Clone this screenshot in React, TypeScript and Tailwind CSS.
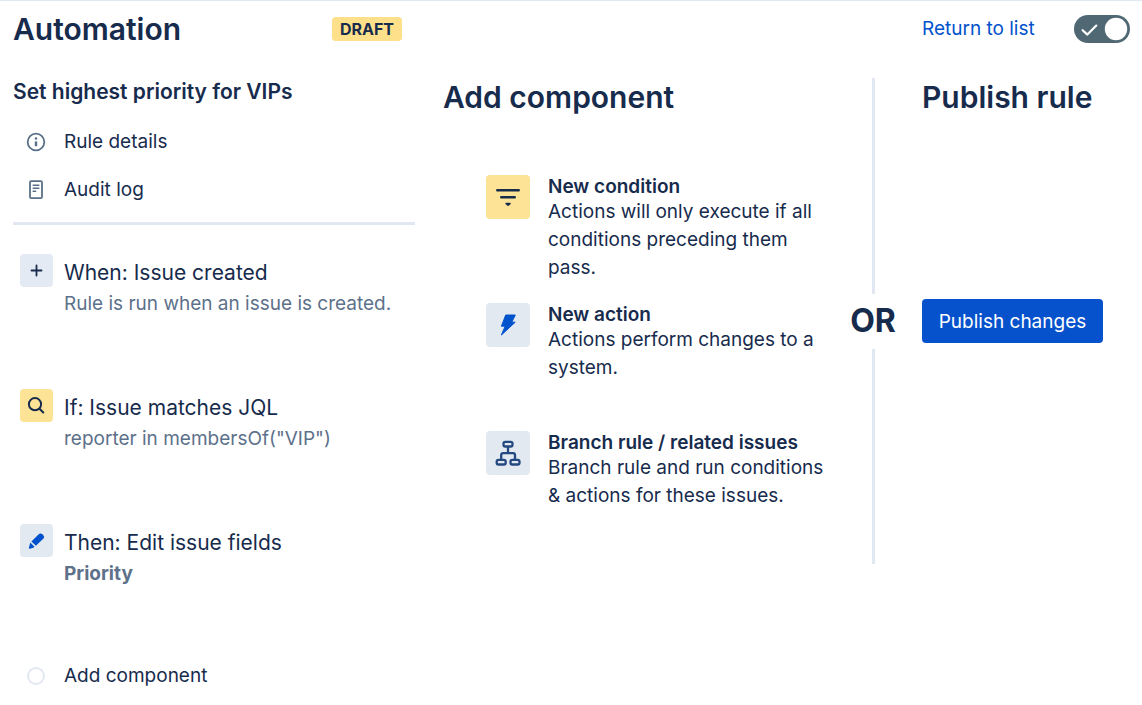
import { useState } from "react";
import type { ReactNode } from "react";

const PlusIcon = () => (
  <svg viewBox="0 0 33 33" className="size-full" fill="none" stroke="#172b4d" strokeWidth="1.8" strokeLinecap="round" aria-hidden="true">
    <path d="M16.5 11.5v10M11.5 16.5h10" />
  </svg>
);

const SearchIcon = () => (
  <svg viewBox="0 0 33 33" className="size-full" fill="none" stroke="#172b4d" strokeWidth="2" strokeLinecap="round" aria-hidden="true">
    <circle cx="15" cy="15.2" r="6.1" />
    <path d="M19.5 19.7l3.8 3.8" />
  </svg>
);

const PencilIcon = () => (
  <svg viewBox="0 0 33 33" className="size-full" fill="#0052cc" aria-hidden="true">
    <path d="M11.4 17.4l7.6-7.4a2 2 0 0 1 1.8-.5 4.6 4.6 0 0 1 3.2 3.1 2 2 0 0 1-.5 1.8l-7.6 7.4z" />
    <path d="M10.3 18.6l4.2 4.1-1.1 1-3.6 1a.8.8 0 0 1-.9-.9z" />
  </svg>
);

const FilterIcon = () => (
  <svg viewBox="0 0 44 44" className="size-full" fill="none" stroke="#172b4d" strokeWidth="2.6" strokeLinecap="round" aria-hidden="true">
    <path d="M11.3 15.3h21.4M15.3 22.3h13.4" />
    <path d="M20.3 28.6h3.6L22.1 30z" strokeWidth="1.8" strokeLinejoin="round" fill="#172b4d" />
  </svg>
);

const BoltIcon = () => (
  <svg viewBox="0 0 44 44" className="size-full" fill="#0052cc" stroke="#0052cc" strokeWidth="1" strokeLinejoin="round" aria-hidden="true">
    <path d="M19.7 12h9.6l-3.5 7.2h3.4L15.4 32l3.8-8.8h-3.8z" />
  </svg>
);

const BranchIcon = () => (
  <svg viewBox="0 0 44 44" className="size-full" fill="none" stroke="#24487f" strokeWidth="2.3" aria-hidden="true">
    <rect x="17.5" y="10.9" width="9" height="4.6" rx="1.8" />
    <rect x="10.7" y="28.9" width="9" height="4.6" rx="1.8" />
    <rect x="24.5" y="28.9" width="9" height="4.6" rx="1.8" />
    <path d="M22 15.6v6.6M15.2 28.8v-4.6a2 2 0 0 1 2-2h9.8a2 2 0 0 1 2 2v4.6" />
  </svg>
);

const InfoIcon = () => (
  <svg viewBox="0 0 20 20" className="size-5" fill="none" stroke="#5a7088" strokeWidth="1.8" aria-hidden="true">
    <circle cx="10" cy="10" r="8.3" />
    <path d="M10 9.4v4.8" strokeWidth="2.4" />
    <circle cx="10" cy="6.5" r="1.3" fill="#5a7088" stroke="none" />
  </svg>
);

const LogIcon = () => (
  <svg viewBox="0 0 20 20" className="size-5" fill="none" stroke="#5a7088" strokeWidth="1.8" strokeLinecap="round" aria-hidden="true">
    <rect x="4" y="1.2" width="12" height="17" rx="1.2" />
    <path d="M7.2 5.2h5.6M7.2 8.2h5.6M7.2 11.2h2.4" strokeWidth="1.6" />
  </svg>
);

type Step = { title: string; detail: ReactNode; icon: ReactNode; tile: string };

const steps: Step[] = [
  { title: "When: Issue created", detail: "Rule is run when an issue is created.", icon: <PlusIcon />, tile: "bg-[#e4eaf3]" },
  { title: "If: Issue matches JQL", detail: 'reporter in membersOf("VIP")', icon: <SearchIcon />, tile: "bg-[#fde395]" },
  { title: "Then: Edit issue fields", detail: <strong className="font-bold">Priority</strong>, icon: <PencilIcon />, tile: "bg-[#e2e9f1]" },
];

const components = [
  { title: "New condition", text: "Actions will only execute if all conditions preceding them pass.", icon: <FilterIcon />, tile: "bg-[#fde395]" },
  { title: "New action", text: "Actions perform changes to a system.", icon: <BoltIcon />, tile: "bg-[#e2e9f1]" },
  { title: "Branch rule / related issues", text: "Branch rule and run conditions & actions for these issues.", icon: <BranchIcon />, tile: "bg-[#e2e9f1]" },
];

function Header() {
  const [enabled, setEnabled] = useState(true);
  return (
    <header className="flex h-14 items-center justify-between">
      <div className="flex w-[402px] shrink-0 items-center justify-between pr-[13px]">
        <h1 className="text-[30px] leading-10 font-semibold">Automation</h1>
        <span className="rounded-[4px] bg-[#fee08a] px-2 text-[16px] leading-6 font-bold">DRAFT</span>
      </div>
      <div className="flex w-[208px] shrink-0 items-center justify-between">
        <a href="#rules" className="text-[19px] leading-7 text-[#0052cc]">Return to list</a>
        <label className="relative block h-7 w-14 cursor-pointer">
          <input
            type="checkbox"
            role="switch"
            aria-label="Rule enabled"
            checked={enabled}
            onChange={(e) => setEnabled(e.target.checked)}
            className="peer absolute inset-0 size-full cursor-pointer appearance-none rounded-full bg-[#8993a4] checked:bg-[#4f6874]"
          />
          <svg viewBox="0 0 56 28" className="pointer-events-none absolute inset-0 size-full" fill="none" aria-hidden="true">
            {enabled && <path d="M8.6 15.2l4.8 4.4L22.3 10.6" stroke="#fff" strokeWidth="2.2" strokeLinecap="round" strokeLinejoin="round" />}
            <circle cx={enabled ? 42 : 14} cy="14" r="11.2" fill="#fff" />
          </svg>
        </label>
      </div>
    </header>
  );
}

function RulePanel() {
  return (
    <section className="w-[402px] shrink-0 pt-[19px]">
      <h2 className="text-[21px] leading-8 font-semibold">Set highest priority for VIPs</h2>
      <nav className="flex flex-col border-b-[3px] border-[#e2e8f1] pt-[10px] pb-2">
        <a href="#details" className="flex h-12 items-center pl-[13px] text-[19px] leading-7">
          <InfoIcon />
          <span className="pl-[18px]">Rule details</span>
        </a>
        <a href="#audit" className="flex h-12 items-center pl-[13px] text-[19px] leading-7">
          <LogIcon />
          <span className="pl-[18px]">Audit log</span>
        </a>
      </nav>
      <ol className="pt-[29px] pl-[7px]">
        {steps.map((s) => (
          <li key={s.title} className="flex h-[135px] items-start gap-[11px]">
            <span className={`size-[33px] shrink-0 rounded-[4px] ${s.tile}`}>{s.icon}</span>
            <div className="pt-[3px]">
              <h3 className="text-[21px] leading-8">{s.title}</h3>
              <p className="text-[19px] leading-[30px] text-[#5d718a]">{s.detail}</p>
            </div>
          </li>
        ))}
      </ol>
      <button type="button" className="flex h-[34px] cursor-pointer items-center pl-[14px] text-[19px] leading-7">
        <span className="size-[18px] rounded-full border-2 border-[#e3e9f2]" />
        <span className="pl-[19px]">Add component</span>
      </button>
    </section>
  );
}

function ComponentPanel() {
  return (
    <section className="min-w-0 flex-1 pt-5">
      <h2 className="text-[30px] leading-10 font-semibold">Add component</h2>
      <ul className="pt-[58px] pl-[43px]">
        {components.map((c) => (
          <li key={c.title} className="flex min-h-32 items-start gap-[18px]">
            <span className={`size-11 shrink-0 rounded-[4px] ${c.tile}`}>{c.icon}</span>
            <div className="max-w-[284px] pt-px">
              <h3 className="text-[19px] leading-[22px] font-semibold">{c.title}</h3>
              <p className="text-[19px] leading-7">{c.text}</p>
            </div>
          </li>
        ))}
      </ul>
    </section>
  );
}

function OrDivider() {
  return (
    <div className="flex h-[507px] w-[46px] shrink-0 flex-col items-center pt-[21px]">
      <div className="w-[3px] flex-1 bg-[#e2e8f1]" />
      <div className="flex h-[55px] items-center text-[32px] leading-10 font-bold">OR</div>
      <div className="w-[3px] flex-1 bg-[#e2e8f1]" />
    </div>
  );
}

function PublishPanel() {
  return (
    <section className="w-[208px] shrink-0 pt-5">
      <h2 className="text-[30px] leading-10 font-semibold whitespace-nowrap">Publish rule</h2>
      <button type="button" className="mt-[182px] h-11 w-[181px] cursor-pointer rounded-[4px] bg-[#0652cc] pt-px text-[19px] leading-7 text-white">
        Publish changes
      </button>
    </section>
  );
}

export default function App() {
  return (
    <div className="min-h-screen border-t border-[#e3e9f2] bg-white pr-3 pl-[13px] font-['Inter','Liberation_Sans',sans-serif] text-[#172b4d]">
      <Header />
      <main className="flex items-start">
        <RulePanel />
        <div className="w-7 shrink-0" />
        <ComponentPanel />
        <OrDivider />
        <div className="w-[26px] shrink-0" />
        <PublishPanel />
      </main>
    </div>
  );
}
